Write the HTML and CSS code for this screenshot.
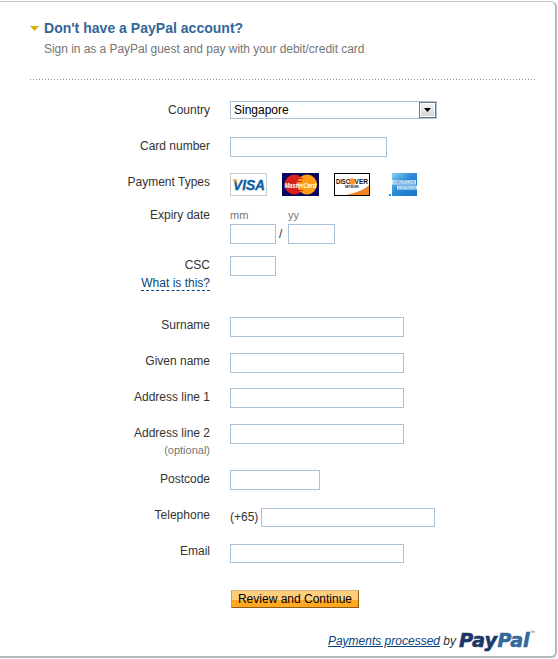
FILE: index.html
```html
<!DOCTYPE html>
<html lang="en">
<head>
<meta charset="utf-8">
<title>PayPal checkout</title>
<link rel="stylesheet" href="styles.css">
</head>
<body>
<main class="panel">
  <header class="intro">
    <svg class="arrow" width="9" height="5" viewBox="0 0 9 5"><path d="M0 0H9L4.5 5Z" fill="#d9ae0b"/></svg>
    <div>
      <h1>Don't have a PayPal account?</h1>
      <p>Sign in as a PayPal guest and pay with your debit/credit card</p>
    </div>
  </header>
  <svg class="rule" width="506" height="1"><path d="M0 .5H506" stroke="#929292" stroke-dasharray="1 2"/></svg>
  <form>
    <div class="row"><label for="country">Country</label>
      <div class="select" id="country"><span>Singapore</span><i><svg width="7" height="4" viewBox="0 0 7 4"><path d="M0 0H7L3.5 4Z"/></svg></i></div></div>
    <div class="row"><label for="card">Card number</label><input id="card" class="card"></div>
    <div class="row payments"><span class="label">Payment Types</span>
      <div class="logos">
        <svg width="37" height="23" viewBox="0 0 37 23"><rect x=".5" y=".5" width="36" height="22" fill="#fff" stroke="#ccc"/><text x="3" y="17" class="visa" textLength="32" lengthAdjust="spacingAndGlyphs">VISA</text><path d="M2 6.5H6.5L7.5 11Q5 8 2 6.5Z" fill="#e8a52c"/></svg>
        <svg width="37" height="23" viewBox="0 0 37 23"><rect width="37" height="23" fill="#06065c"/><circle cx="12.5" cy="11.5" r="10" fill="#d8201c"/><circle cx="25" cy="11.5" r="10" fill="#ff9d16"/><path d="M16 5.5H21M15 8.5H20M15 14.5H20M16 17.5H21" stroke="#d8201c"/><text x="2.5" y="14.5" class="mc" textLength="32" lengthAdjust="spacingAndGlyphs">MasterCard</text></svg>
        <svg width="36" height="23" viewBox="0 0 36 23"><rect x=".5" y=".5" width="35" height="22" fill="#fff" stroke="#000"/><path d="M12 22Q27 19 35 12.500V22Z" fill="#f58220"/><circle cx="18.2" cy="8.5" r="3.2" fill="#ff962c"/><text x="2" y="11" class="disc" textLength="14" lengthAdjust="spacingAndGlyphs">DISC</text><text x="20.5" y="11" class="disc" textLength="13.5" lengthAdjust="spacingAndGlyphs">VER</text><text x="11" y="15" class="net" textLength="14" lengthAdjust="spacingAndGlyphs">NETWORK</text></svg>
        <svg width="28" height="23" viewBox="0 0 28 23"><defs><linearGradient id="amex" x1="0" y1="0" x2="1" y2="1"><stop stop-color="#86d0f5"/><stop offset=".45" stop-color="#2b8bd6"/><stop offset="1" stop-color="#1676c5"/></linearGradient></defs><path d="M3 0H28V23H3Z" fill="url(#amex)"/><path d="M0 21H2V23H0Z" fill="#1697e5"/><rect x="3" y="7" width="24" height="4.5" fill="#d9edfa"/><rect x="8" y="12.5" width="20" height="4" fill="#d9edfa"/><text x="4" y="11" class="amex" textLength="22" lengthAdjust="spacingAndGlyphs">AMERICAN</text><text x="9" y="16.2" class="amex" textLength="18" lengthAdjust="spacingAndGlyphs">EXPRESS</text></svg>
      </div></div>
    <div class="row expiry"><span class="label">Expiry date</span>
      <div class="dates"><label>mm<input class="mm"></label><span class="slash">/</span><label>yy<input class="yy"></label></div></div>
    <div class="row csc"><div class="label">CSC<br><a href="#" class="what">What is this?</a></div><input class="mm" aria-label="CSC"></div>
    <div class="row low"><label for="surname">Surname</label><input id="surname"></div>
    <div class="row low"><label for="given">Given name</label><input id="given"></div>
    <div class="row"><label for="a1">Address line 1</label><input id="a1"></div>
    <div class="row address2"><label for="a2">Address line 2<small>(optional)</small></label><input id="a2"></div>
    <div class="row"><label for="post">Postcode</label><input id="post" class="post"></div>
    <div class="row contact"><label for="tel">Telephone</label><div class="phone"><span>(+65)</span><input id="tel"></div></div>
    <div class="row contact"><label for="email">Email</label><input id="email"></div>
    <button type="button"><span>Review and Continue</span></button>
  </form>
  <footer>
    <span class="by"><a href="#">Payments processed</a> by</span>
    <svg class="paypal" width="76" height="24" viewBox="0 0 76 24"><text x="0" y="17" class="pay" textLength="38" lengthAdjust="spacingAndGlyphs">Pay</text><text x="38.500" y="17" class="pal" textLength="32" lengthAdjust="spacingAndGlyphs">Pal</text><text x="71" y="4" class="tm">™</text></svg>
  </footer>
</main>
</body>
</html>
```
FILE: styles.css
```css
* { box-sizing: border-box; }
body { margin: 0; background: #fff; overflow: hidden; font: 12px/18px "Liberation Sans", Arial, sans-serif; color: #333; }
svg { overflow: visible; }
.panel { width: 557px; height: 657px; margin-top: 1px; border: solid #b7b7b7; border-width: 1px 2px 2px 0; border-top-color: #c8c8c8; border-radius: 0 6px 6px 0; box-shadow: 0 1px 0 #d8d8d8; }
.intro { display: flex; gap: 5px; height: 77px; padding: 17px 0 0 30px; }
.arrow { margin-top: 7px; }
h1 { margin: 0; font-size: 14px; line-height: 18px; color: #336699; letter-spacing: .02px; }
p { margin: 3px 0 0; color: #757575; letter-spacing: -.04px; }
.rule { display: block; margin-left: 30px; }
form { padding-top: 21px; }
.row { display: grid; grid-template-columns: 210px auto; column-gap: 20px; justify-content: start; align-items: start; height: 36px; }
.row > label, .label { text-align: right; }
input { display: block; width: 174px; height: 20px; margin: 0; padding: 1px 3px; border: 1px solid #a9c0d9; border-radius: 0; background: #fff; }
.card { width: 157px; }
.post { width: 90px; }
.mm { width: 46px; }
.yy { width: 47px; }
.select { display: flex; justify-content: space-between; width: 207px; height: 18px; border: 1px solid #a9c0d9; color: #000; line-height: 16px; padding-left: 3px; }
.select i { display: flex; align-items: center; justify-content: center; width: 17px; height: 16px; border: 1px solid #777; background: linear-gradient(#f5f5f5, #d3d3d3); box-shadow: inset 0 0 0 1px #fff; }
.payments { height: 33px; }
.logos { display: flex; gap: 15px; }
.logos svg:last-child { margin-left: 4px; }
.visa { font: italic bold 15px "Liberation Sans", sans-serif; fill: #0d5da5; stroke: #0d5da5; stroke-width: .4px; }
.mc { font: italic bold 8px "Liberation Sans", sans-serif; fill: #fff; }
.disc { font: bold 7px "Liberation Sans", sans-serif; fill: #111; }
.net { font: bold 4px "Liberation Sans", sans-serif; fill: #111; }
.amex { font: bold 5px "Liberation Sans", sans-serif; fill: #5eaae0; }
.expiry { height: 50px; }
.dates { display: flex; font-size: 11px; color: #757575; }
.slash { width: 12px; padding: 19px 0 0 3px; font-size: 12px; color: #333; }
.csc { height: 60px; }
.what { display: inline-block; height: 17px; color: #084482; text-decoration: none; border-bottom: 1px dashed #084482; }
.low input { margin-top: 1px; }
.address2 { height: 46px; }
small { display: block; font-size: 11px; line-height: 17px; color: #757575; }
.contact input { height: 19px; }
.contact > input, .phone { margin-top: 2px; }
.phone { display: flex; }
.phone span { width: 31px; }
button { display: block; width: 128px; height: 18px; margin: 12px 0 0 231px; padding: 0; border: 1px solid; border-color: #d5b981 #945c0c #945c0c #d5a04d; border-radius: 0; background: linear-gradient(#ffce7d 0 55%, #ffa822 55%); font: 12px/16px "Liberation Sans", Arial, sans-serif; color: #000; }
footer { display: flex; align-items: flex-start; justify-content: flex-end; margin-top: 22px; padding-right: 20px; gap: 3px; }
.by { font-style: italic; padding-top: 2px; }
.by a { color: #084482; }
.pay, .pal { font: italic bold 20px "DejaVu Sans", sans-serif; fill: #1b3668; stroke: #1b3668; stroke-width: .6px; }
.pal { fill: #32689c; stroke: #32689c; }
.tm { font: 5px "Liberation Sans", sans-serif; fill: #555; }
```
